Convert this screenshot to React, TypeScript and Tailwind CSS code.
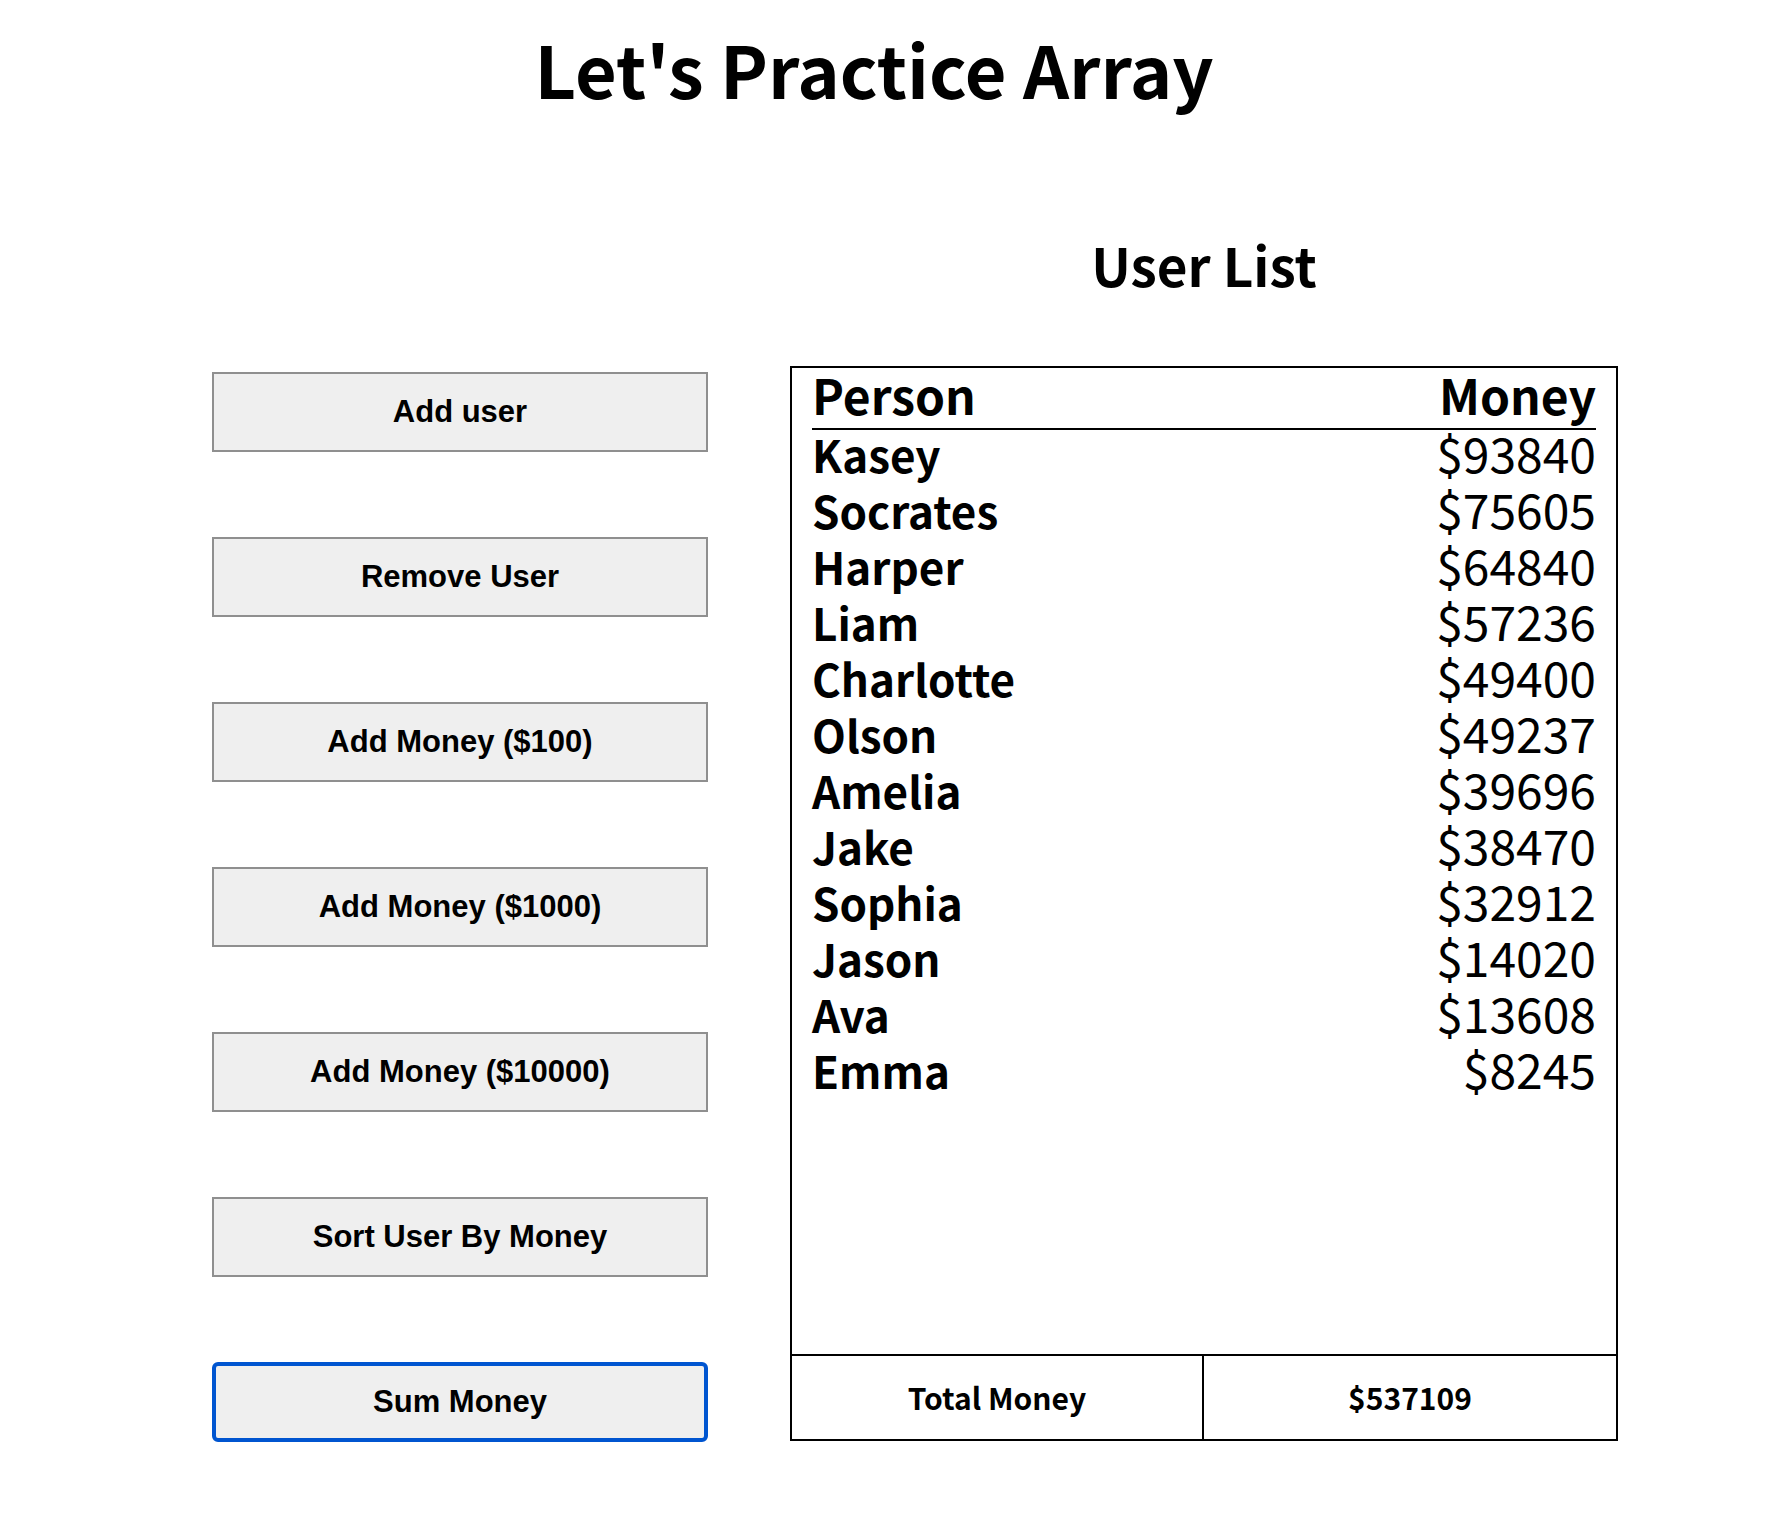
import React from 'react';

const users = [
  { name: 'Kasey', money: 93840 },
  { name: 'Socrates', money: 75605 },
  { name: 'Harper', money: 64840 },
  { name: 'Liam', money: 57236 },
  { name: 'Charlotte', money: 49400 },
  { name: 'Olson', money: 49237 },
  { name: 'Amelia', money: 39696 },
  { name: 'Jake', money: 38470 },
  { name: 'Sophia', money: 32912 },
  { name: 'Jason', money: 14020 },
  { name: 'Ava', money: 13608 },
  { name: 'Emma', money: 8245 },
];

const buttons = [
  'Add user',
  'Remove User',
  'Add Money ($100)',
  'Add Money ($1000)',
  'Add Money ($10000)',
  'Sort User By Money',
];

const total = users.reduce((sum, u) => sum + u.money, 0);

export default function App() {
  return (
    <div className="min-h-[1536px] bg-white text-black font-['Noto_Sans_CJK_KR','Noto_Sans',sans-serif]">
      <h1 className="pt-[32px] pr-[28px] text-center text-[72px] font-bold leading-none">Let's Practice Array</h1>

      <div className="flex items-start pl-[212px]">
        <div className="mt-[268px] flex w-[496px] flex-col gap-[85px]">
          {buttons.map((label) => (
            <button
              key={label}
              className="h-[80px] w-full border-2 border-[#8f8f8f] bg-[#efefef] font-['Liberation_Sans',Arial,sans-serif] text-[31px] font-bold"
            >
              {label}
            </button>
          ))}
          <button className="h-[80px] w-full rounded-[6px] border-4 border-[#0055d0] bg-[#efefef] font-['Liberation_Sans',Arial,sans-serif] text-[31px] font-bold">
            Sum Money
          </button>
        </div>

        <div className="ml-[82px] flex w-[828px] flex-col">
          <h2 className="mt-[130px] mb-[72px] text-center text-[53px] font-bold leading-[60px]">User List</h2>

          <div className="flex h-[1075px] flex-col border-2 border-black">
            <div className="flex-1 px-[20px]">
              <div className="flex items-baseline justify-between border-b-2 border-black pb-[8px] text-[48px] font-bold leading-[52px]">
                <span>Person</span>
                <span>Money</span>
              </div>
              <div className="-mt-[6px]">
                {users.map((u) => (
                  <div key={u.name} className="flex h-[56px] items-baseline justify-between leading-[56px]">
                    <span className="text-[44px] font-bold">{u.name}</span>
                    <span className="text-[48px]">${u.money}</span>
                  </div>
                ))}
              </div>
            </div>
            <div className="grid h-[85px] grid-cols-2 border-t-2 border-black text-[30px] font-bold">
              <div className="flex items-center justify-center border-r-2 border-black">Total Money</div>
              <div className="flex items-center justify-center">${total}</div>
            </div>
          </div>
        </div>
      </div>
    </div>
  );
}
